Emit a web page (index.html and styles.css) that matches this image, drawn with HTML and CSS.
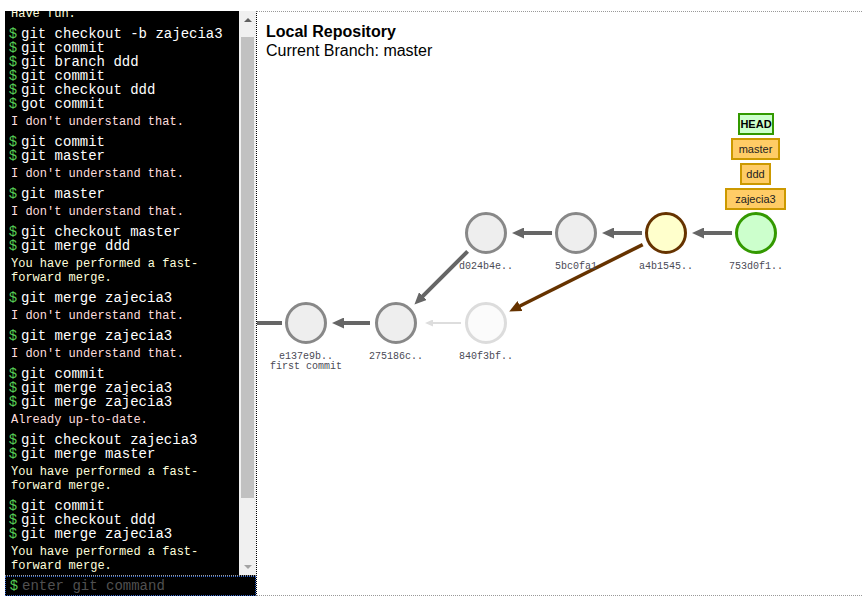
FILE: index.html
```html
<!DOCTYPE html>
<html>
<head>
<meta charset="utf-8">
<title>Explain Git</title>
<link rel="stylesheet" href="styles.css">
</head>
<body>
<div class="app">
  <div class="control-box">
    <div class="log">
      <div class="lines">
        <div class="out info">Type git commands in the box below to see what happens. Have fun.</div>
        <div class="cmd"><span class="prompt">$</span><span>git checkout -b zajecia3</span></div>
        <div class="cmd"><span class="prompt">$</span><span>git commit</span></div>
        <div class="cmd"><span class="prompt">$</span><span>git branch ddd</span></div>
        <div class="cmd"><span class="prompt">$</span><span>git commit</span></div>
        <div class="cmd"><span class="prompt">$</span><span>git checkout ddd</span></div>
        <div class="cmd"><span class="prompt">$</span><span>got commit</span></div>
        <div class="out error">I don't understand that.</div>
        <div class="cmd"><span class="prompt">$</span><span>git commit</span></div>
        <div class="cmd"><span class="prompt">$</span><span>git master</span></div>
        <div class="out error">I don't understand that.</div>
        <div class="cmd"><span class="prompt">$</span><span>git master</span></div>
        <div class="out error">I don't understand that.</div>
        <div class="cmd"><span class="prompt">$</span><span>git checkout master</span></div>
        <div class="cmd"><span class="prompt">$</span><span>git merge ddd</span></div>
        <div class="out info">You have performed a fast-forward merge.</div>
        <div class="cmd"><span class="prompt">$</span><span>git merge zajecia3</span></div>
        <div class="out error">I don't understand that.</div>
        <div class="cmd"><span class="prompt">$</span><span>git merge zajecia3</span></div>
        <div class="out error">I don't understand that.</div>
        <div class="cmd"><span class="prompt">$</span><span>git commit</span></div>
        <div class="cmd"><span class="prompt">$</span><span>git merge zajecia3</span></div>
        <div class="cmd"><span class="prompt">$</span><span>git merge zajecia3</span></div>
        <div class="out error">Already up-to-date.</div>
        <div class="cmd"><span class="prompt">$</span><span>git checkout zajecia3</span></div>
        <div class="cmd"><span class="prompt">$</span><span>git merge master</span></div>
        <div class="out info">You have performed a fast-forward merge.</div>
        <div class="cmd"><span class="prompt">$</span><span>git commit</span></div>
        <div class="cmd"><span class="prompt">$</span><span>git checkout ddd</span></div>
        <div class="cmd"><span class="prompt">$</span><span>git merge zajecia3</span></div>
        <div class="out info last">You have performed a fast-forward merge.</div>
      </div>
      <div class="scrollbar">
        <div class="sb-btn"><span class="arrow-up"></span></div>
        <div class="sb-track"><div class="sb-thumb"></div></div>
        <div class="sb-btn"><span class="arrow-down"></span></div>
      </div>
    </div>
    <div class="input-row">
      <span class="prompt">$</span>
      <input class="cmd-input" type="text" placeholder="enter git command">
    </div>
  </div>

  <div class="graph">
    <div class="title">Local Repository</div>
    <div class="subtitle">Current Branch: master</div>
    <svg class="canvas" width="606" height="583" viewBox="257 12 606 583" xmlns="http://www.w3.org/2000/svg">
      <defs>
        <marker id="ah-gray" markerUnits="userSpaceOnUse" markerWidth="12" markerHeight="11" refX="4" refY="5.5" orient="auto">
          <path d="M0,0 L12,5.5 L0,11 z" fill="#666"/>
        </marker>
        <marker id="ah-brown" markerUnits="userSpaceOnUse" markerWidth="12" markerHeight="11" refX="4" refY="5.5" orient="auto">
          <path d="M0,0 L12,5.5 L0,11 z" fill="#663300"/>
        </marker>
        <marker id="ah-light" markerUnits="userSpaceOnUse" markerWidth="8" markerHeight="7" refX="2" refY="3.5" orient="auto">
          <path d="M0,0 L8,3.5 L0,7 z" fill="#ddd"/>
        </marker>
      </defs>

      <line x1="250" y1="323" x2="282" y2="323" class="link"/>
      <line x1="370" y1="323" x2="340" y2="323" class="link" marker-end="url(#ah-gray)"/>
      <line x1="461" y1="323" x2="431" y2="323" class="link faded" marker-end="url(#ah-light)"/>
      <line x1="467.6" y1="251.4" x2="420.1" y2="298.9" class="link" marker-end="url(#ah-gray)"/>
      <line x1="552" y1="233" x2="520" y2="233" class="link" marker-end="url(#ah-gray)"/>
      <line x1="642" y1="233" x2="610" y2="233" class="link" marker-end="url(#ah-gray)"/>
      <line x1="732" y1="233" x2="700" y2="233" class="link" marker-end="url(#ah-gray)"/>
      <line x1="642.7" y1="244.6" x2="516.4" y2="307.8" class="link brown" marker-end="url(#ah-brown)"/>

      <circle cx="306" cy="323" r="19.5" class="commit"/>
      <circle cx="396" cy="323" r="19.5" class="commit"/>
      <circle cx="486" cy="323" r="19.5" class="commit unreachable"/>
      <circle cx="486" cy="233" r="19.5" class="commit"/>
      <circle cx="576" cy="233" r="19.5" class="commit"/>
      <circle cx="666" cy="233" r="19.5" class="commit merge-parent"/>
      <circle cx="756" cy="233" r="19.5" class="commit head"/>

      <text x="306" y="359" class="sha">e137e9b..</text>
      <text x="306" y="369" class="sha">first commit</text>
      <text x="396" y="359" class="sha">275186c..</text>
      <text x="486" y="359" class="sha">840f3bf..</text>
      <text x="486" y="269" class="sha">d024b4e..</text>
      <text x="576" y="269" class="sha">5bc0fa1</text>
      <text x="666" y="269" class="sha">a4b1545..</text>
      <text x="756" y="269" class="sha">753d0f1..</text>

      <rect x="739" y="114" width="34" height="20" class="tag head-tag"/>
      <text x="756" y="128" class="tag-text bold">HEAD</text>
      <rect x="732" y="139" width="47" height="20" class="tag branch-tag"/>
      <text x="755.5" y="153" class="tag-text">master</text>
      <rect x="741" y="164" width="29" height="20" class="tag branch-tag"/>
      <text x="755.5" y="178" class="tag-text">ddd</text>
      <rect x="726" y="189" width="59" height="20" class="tag branch-tag"/>
      <text x="755.5" y="203" class="tag-text">zajecia3</text>
    </svg>
  </div>
</div>
</body>
</html>
```

FILE: styles.css
```css
html, body {
  overflow: hidden;
}
body {
  margin: 0;
  padding: 11px 0 0 5px;
  font-family: "Liberation Sans", Arial, sans-serif;
  background: #fff;
}
.app {
  display: flex;
  align-items: flex-start;
  width: 900px;
}
.control-box {
  width: 251px;
  flex: none;
  display: flex;
  flex-direction: column;
}
.log {
  height: 564px;
  border-bottom: 1px dotted #999;
  background: #000;
  display: flex;
}
.lines {
  flex: 1;
  min-width: 0;
  overflow: hidden;
  display: flex;
  flex-direction: column;
  justify-content: flex-end;
  font-family: "Liberation Mono", "Courier New", monospace;
}
.cmd {
  display: flex;
  flex: none;
  color: #fff;
  font-size: 14px;
  line-height: 14px;
  white-space: pre;
}
.prompt {
  width: 16px;
  flex: none;
  text-align: center;
  color: #55cc55;
  font-family: "Liberation Mono", "Courier New", monospace;
  font-size: 14px;
}
.out {
  flex: none;
  font-size: 12px;
  line-height: 14px;
  padding: 4px 5px 6px 6px;
}
.out.error {
  color: #ffdede;
}
.out.info {
  color: #ffffdc;
}
.out.last {
  margin-bottom: -4px;
}
.scrollbar {
  width: 17px;
  flex: none;
  background: #f0f0f0;
  display: flex;
  flex-direction: column;
}
.sb-btn {
  height: 17px;
  display: flex;
  align-items: center;
  justify-content: center;
  flex: none;
}
.arrow-up {
  width: 0;
  height: 0;
  border-left: 4px solid transparent;
  border-right: 4px solid transparent;
  border-bottom: 4px solid #606060;
}
.arrow-down {
  width: 0;
  height: 0;
  border-left: 4px solid transparent;
  border-right: 4px solid transparent;
  border-top: 4px solid #a3a3a3;
}
.sb-track {
  flex: 1;
  padding: 9px 2px 0 2px;
}
.sb-thumb {
  height: 461px;
  background: #c1c1c1;
}
.input-row {
  height: 18px;
  border: 1px dotted #3366cc;
  background: #000;
  display: flex;
  align-items: center;
}
.cmd-input {
  flex: 1;
  min-width: 0;
  border: none;
  outline: none;
  background: transparent;
  color: #fff;
  padding: 0;
  margin: 0;
  font-family: "Liberation Mono", "Courier New", monospace;
  font-size: 14px;
  line-height: 18px;
  height: 18px;
}
.cmd-input::placeholder {
  color: #505050;
}
.graph {
  position: relative;
  width: 620px;
  flex: none;
  height: 585px;
  box-sizing: border-box;
  border-top: 1px dotted #999;
  border-bottom: 1px dotted #999;
  border-left: 1px dotted #000;
  padding: 10px 0 0 9px;
}
.title {
  font-weight: bold;
  font-size: 16px;
  line-height: 19px;
  color: #000;
}
.subtitle {
  font-size: 16px;
  line-height: 19px;
  color: #000;
}
.canvas {
  position: absolute;
  top: 0;
  left: 0;
}
.link {
  stroke: #666;
  stroke-width: 4;
}
.link.brown {
  stroke: #663300;
  stroke-width: 3.5;
}
.link.faded {
  stroke: #ddd;
  stroke-width: 2;
}
.commit {
  fill: #eee;
  stroke: #888;
  stroke-width: 3;
}
.commit.unreachable {
  fill: #fbfbfb;
  stroke: #dcdcdc;
}
.commit.merge-parent {
  fill: #ffffcc;
  stroke: #663300;
}
.commit.head {
  fill: #ccffcc;
  stroke: #339900;
}
.sha {
  font-family: "Liberation Mono", "Courier New", monospace;
  font-size: 10px;
  fill: #4a4a55;
  text-anchor: middle;
}
.tag {
  stroke-width: 2;
}
.head-tag {
  fill: #ccffcc;
  stroke: #339900;
}
.branch-tag {
  fill: #ffcc66;
  stroke: #cc9900;
}
.tag-text {
  font-family: "Liberation Sans", Arial, sans-serif;
  font-size: 11px;
  fill: #222;
  text-anchor: middle;
}
.tag-text.bold {
  font-weight: bold;
  fill: #000;
}
```
